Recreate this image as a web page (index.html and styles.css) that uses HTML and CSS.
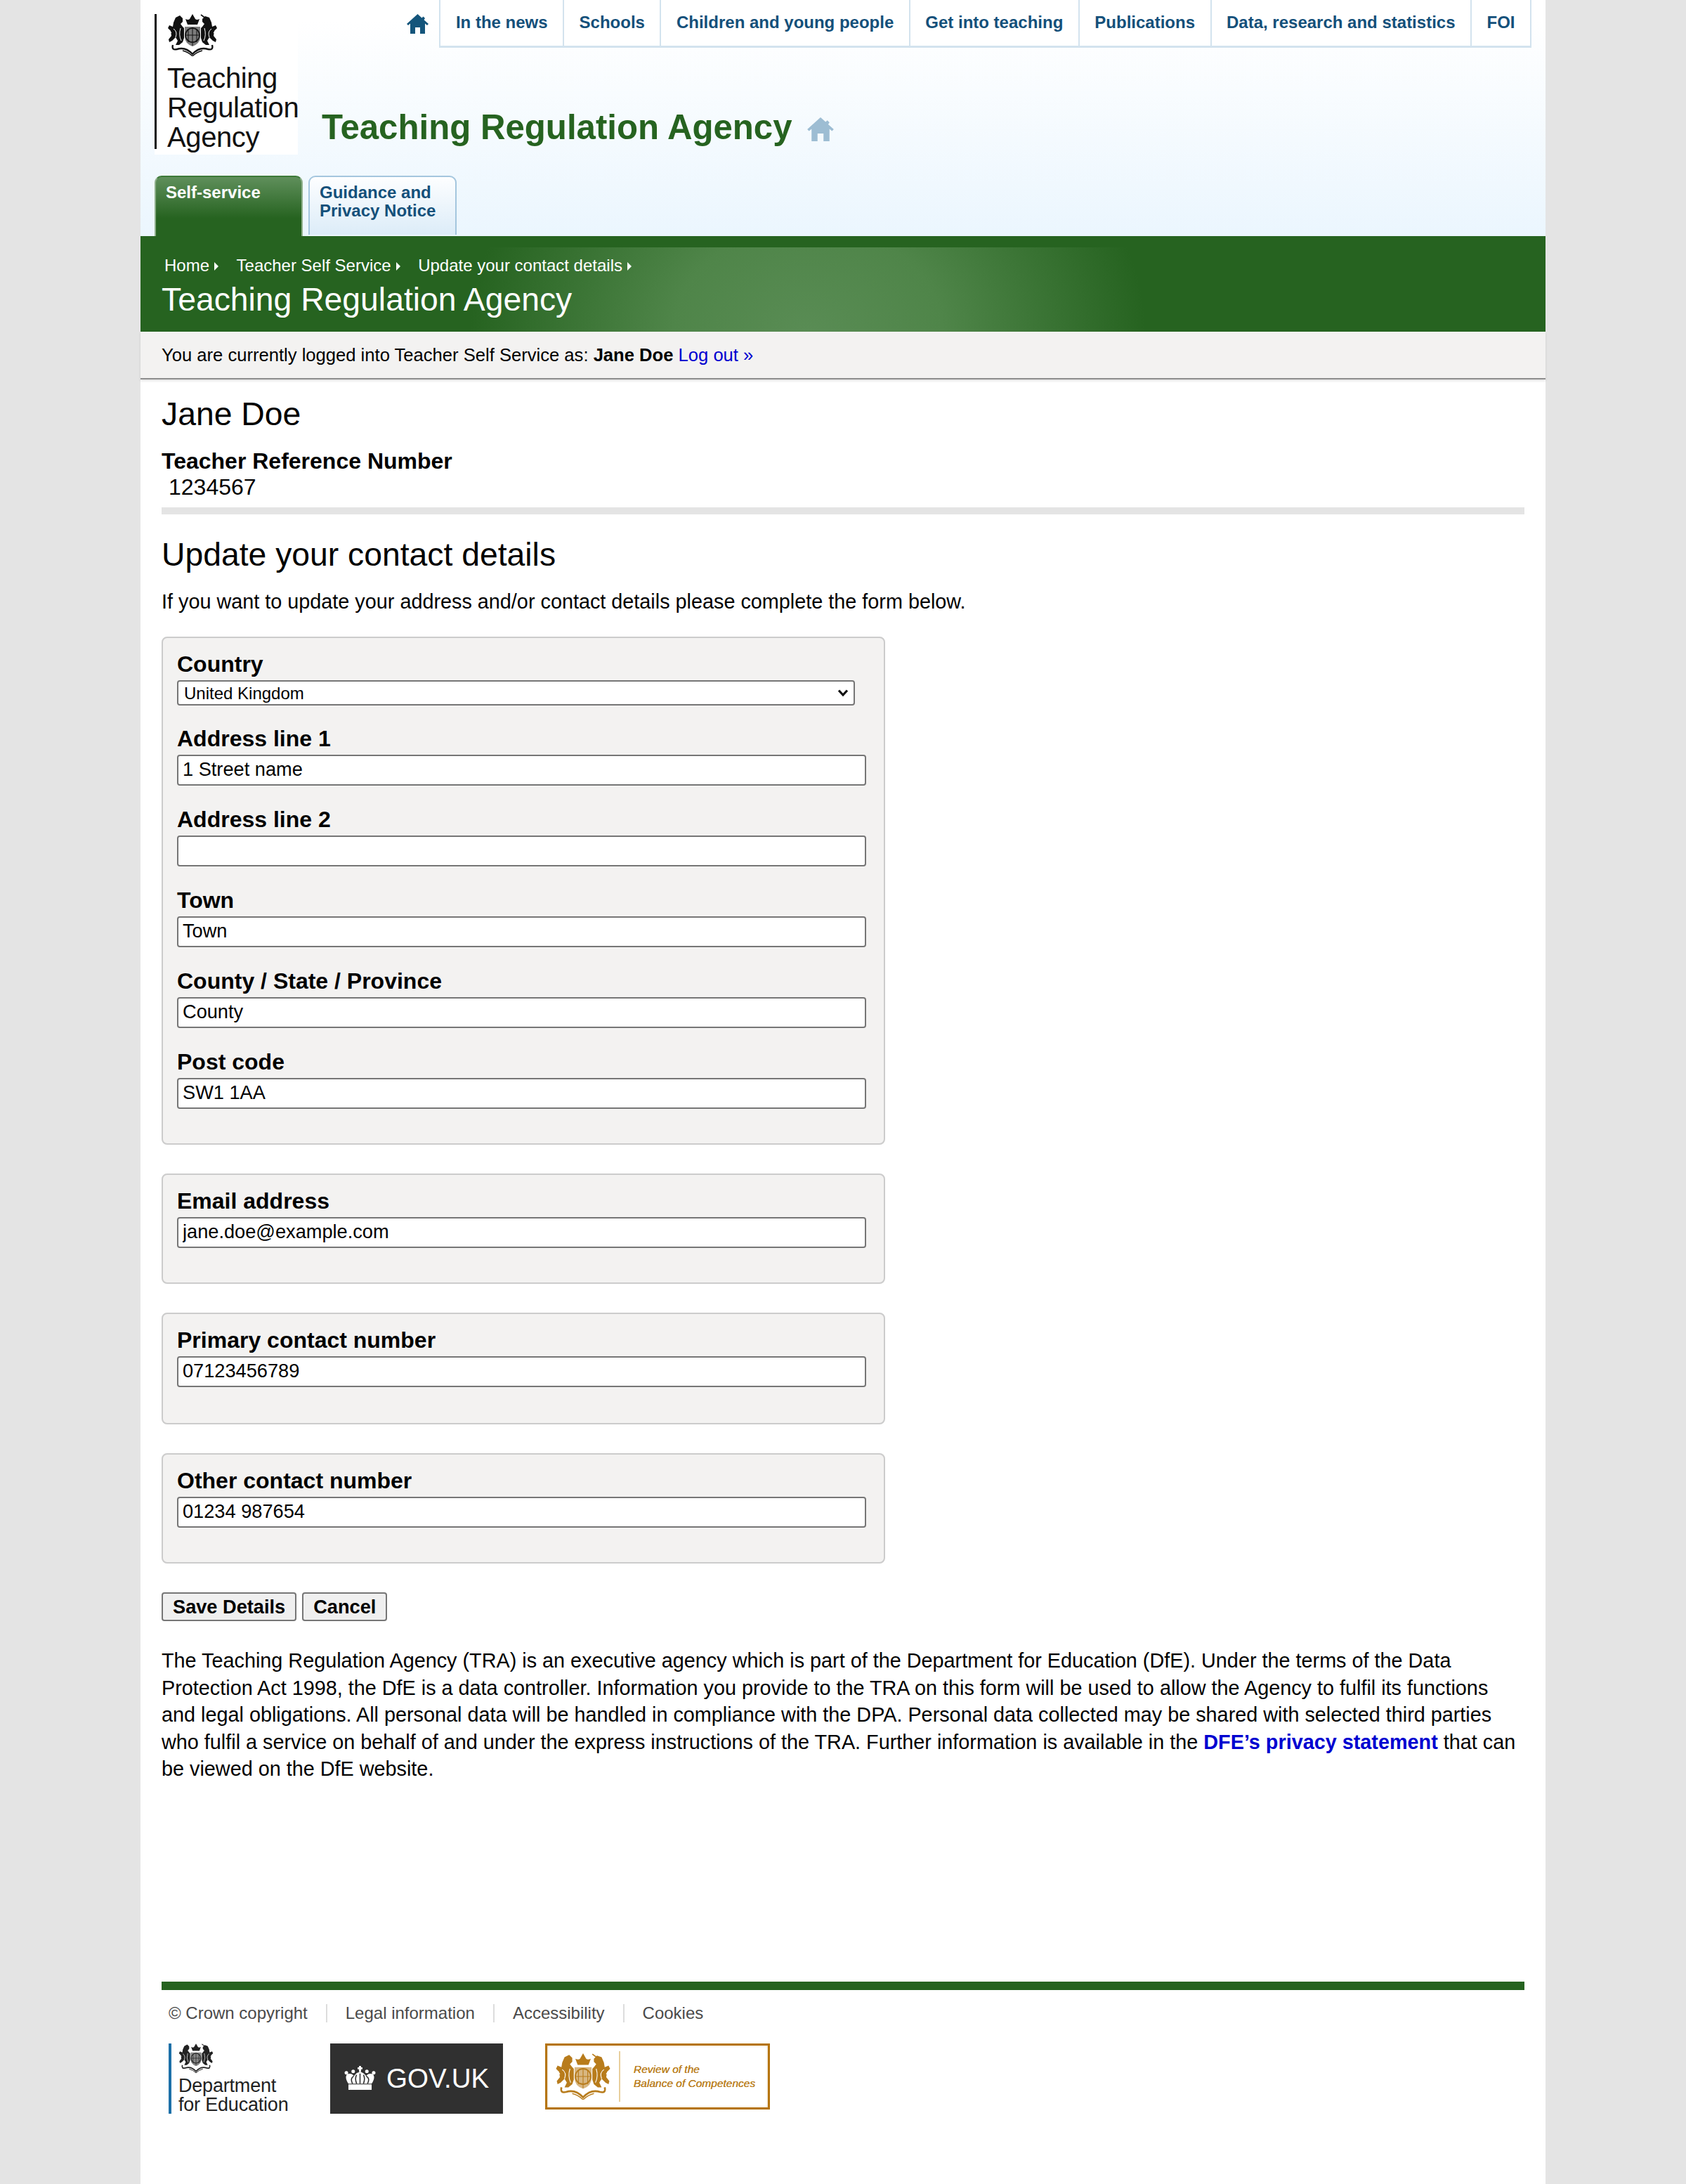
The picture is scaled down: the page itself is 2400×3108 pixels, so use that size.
FILE: index.html
```html
<!DOCTYPE html>
<html lang="en">
<head>
<meta charset="utf-8">
<title>Update your contact details - Teaching Regulation Agency</title>
<link rel="stylesheet" href="styles.css">
</head>
<body>
<svg class="defs" aria-hidden="true">
  <symbol id="crest" viewBox="0 0 72 60">
    <path fill="currentColor" d="M29 15 L26 7 Q30 9 32 7 L36 0 L40 7 Q42 9 46 7 L43 15Z"/>
    <path fill="currentColor" opacity=".55" d="M25 18 H47 V32 Q47 42 36 46 Q25 42 25 32Z"/>
    <circle cx="36" cy="30" r="10" fill="none" stroke="currentColor" stroke-width="1.6"/>
    <path stroke="currentColor" stroke-width="1" d="M36 19V45M26 30H46M30 22V40M42 22V40"/>
    <path fill="currentColor" d="M12 5 L18 2 L22 6 L22 11 L19 14 L22 18 L24 20 V34 L22 40 L17 44 L12 44 L15 38 L12 33 L7 38 L3 40 L2 36 L6 31 L5 24 L1 20 L3 16 L8 18 L9 12 Z"/>
    <path fill="currentColor" d="M60 5 L54 3 L50 7 L50 11 L53 14 L50 18 L48 20 V34 L50 40 L55 44 L60 44 L57 38 L60 33 L65 38 L69 40 L70 36 L66 31 L67 24 L71 20 L69 16 L64 18 L63 12 Z"/>
    <path fill="none" stroke="#fff" stroke-width="1" d="M9 21 Q15 25 12 33 M19 20 Q16 30 20 38 M6 27 L3 23 M63 21 Q57 25 60 33 M53 20 Q56 30 52 38 M66 27 L69 23"/>
    <path stroke="currentColor" stroke-width="1.6" d="M48 1 L56 7"/>
    <path fill="none" stroke="currentColor" stroke-width="2.4" d="M8 44 Q6 52 14 50 Q26 46 36 57 Q46 46 58 50 Q66 52 64 44"/>
    <path fill="none" stroke="currentColor" stroke-width="1.4" d="M22 52 Q30 54 36 60 Q42 54 50 52"/>
  </symbol>
</svg>

<div class="page">
  <header class="header">
    <div class="header-top">
      <a class="logo" href="#">
        <svg class="logo-crest crest"><use href="#crest"/></svg>
        <span class="logo-text">Teaching<br>Regulation<br>Agency</span>
      </a>
      <div class="header-main">
        <nav class="nav">
          <a class="nav-home" href="#" aria-label="Home">
            <svg class="home-icon" viewBox="0 0 31 28"><path d="M15.5 0 L21.5 5.4 L23.5 3.5 L26 6 L24.5 8.2 L31 14 L29 16 L26 13.5 V28 H19 V19 H12 V28 H5 V13.5 L2 16 L0 14 Z"/></svg>
          </a>
          <ul class="nav-list">
            <li class="nav-item"><a href="#">In the news</a></li>
            <li class="nav-item"><a href="#">Schools</a></li>
            <li class="nav-item"><a href="#">Children and young people</a></li>
            <li class="nav-item"><a href="#">Get into teaching</a></li>
            <li class="nav-item"><a href="#">Publications</a></li>
            <li class="nav-item"><a href="#">Data, research and statistics</a></li>
            <li class="nav-item"><a href="#">FOI</a></li>
          </ul>
        </nav>
        <div class="site-title">
          <span>Teaching Regulation Agency</span>
          <svg class="home-icon home-icon-light" viewBox="0 0 31 28"><path d="M15.5 0 L21.5 5.4 L23.5 3.5 L26 6 L24.5 8.2 L31 14 L29 16 L26 13.5 V28 H19 V19 H12 V28 H5 V13.5 L2 16 L0 14 Z"/></svg>
        </div>
      </div>
    </div>
    <div class="tabs">
      <a class="tab tab-active" href="#">Self-service</a>
      <a class="tab tab-idle" href="#">Guidance and<br>Privacy Notice</a>
    </div>
  </header>

  <div class="band">
    <div class="band-inner">
      <ol class="crumbs">
        <li class="crumb"><a href="#">Home</a></li>
        <li class="crumb"><a href="#">Teacher Self Service</a></li>
        <li class="crumb"><a href="#">Update your contact details</a></li>
      </ol>
      <div class="band-title">Teaching Regulation Agency</div>
    </div>
  </div>

  <div class="logged">You are currently logged into Teacher Self Service as: <strong>Jane Doe</strong> <a href="#">Log out »</a></div>

  <main class="main">
    <h1 class="person">Jane Doe</h1>
    <div class="trn-label">Teacher Reference Number</div>
    <div class="trn-value">1234567</div>
    <div class="rule"></div>
    <h2 class="heading">Update your contact details</h2>
    <p class="intro">If you want to update your address and/or contact details please complete the form below.</p>

    <form class="form">
      <fieldset class="box">
        <label class="label label-select">Country</label>
        <select class="select"><option>United Kingdom</option></select>
        <div class="field field-first"><label class="label">Address line 1</label><input class="input" type="text" value="1 Street name"></div>
        <div class="field"><label class="label">Address line 2</label><input class="input" type="text" value=""></div>
        <div class="field"><label class="label">Town</label><input class="input" type="text" value="Town"></div>
        <div class="field"><label class="label">County / State / Province</label><input class="input" type="text" value="County"></div>
        <div class="field"><label class="label">Post code</label><input class="input" type="text" value="SW1 1AA"></div>
      </fieldset>
      <fieldset class="box">
        <div class="field"><label class="label">Email address</label><input class="input" type="text" value="jane.doe@example.com"></div>
      </fieldset>
      <fieldset class="box box-tall">
        <div class="field"><label class="label">Primary contact number</label><input class="input" type="text" value="07123456789"></div>
      </fieldset>
      <fieldset class="box">
        <div class="field"><label class="label">Other contact number</label><input class="input" type="text" value="01234 987654"></div>
      </fieldset>
      <div class="actions">
        <button class="btn" type="button">Save Details</button>
        <button class="btn" type="button">Cancel</button>
      </div>
    </form>

    <p class="notice">The Teaching Regulation Agency (TRA) is an executive agency which is part of the Department for Education (DfE). Under the terms of the Data Protection Act 1998, the DfE is a data controller. Information you provide to the TRA on this form will be used to allow the Agency to fulfil its functions and legal obligations. All personal data will be handled in compliance with the DPA. Personal data collected may be shared with selected third parties who fulfil a service on behalf of and under the express instructions of the TRA. Further information is available in the <a class="notice-link" href="#">DFE’s privacy statement</a> that can be viewed on the DfE website.</p>
  </main>

  <footer class="footer">
    <ul class="foot-links">
      <li class="foot-item">© Crown copyright</li>
      <li class="foot-item">Legal information</li>
      <li class="foot-item">Accessibility</li>
      <li class="foot-item">Cookies</li>
    </ul>
    <div class="foot-logos">
      <div class="dfe">
        <svg class="dfe-crest crest"><use href="#crest"/></svg>
        <span class="dfe-text">Department<br>for Education</span>
      </div>
      <div class="gov">
        <svg class="gov-crown" viewBox="0 0 48 36">
          <path fill="#fff" d="M7 27 H41 V35 H7Z"/>
          <path fill="#fff" d="M7 26 Q1 17 5 12 Q12 10 15 15 Q19 9 24 9 Q29 9 33 15 Q36 10 43 12 Q47 17 41 26Z"/>
          <path fill="none" stroke="#303030" stroke-width="1.6" d="M13 26 Q9 18 15 15 M35 26 Q39 18 33 15 M24 26 V11 M19 26 Q16 18 19 13 M29 26 Q32 18 29 13"/>
          <path fill="#fff" d="M22.5 0 H25.5 V2 H27.5 V5 H25.5 V9 H22.5 V5 H20.5 V2 H22.5Z"/>
          <circle fill="#fff" cx="14" cy="8" r="2.6"/><circle fill="#fff" cx="34" cy="8" r="2.6"/><circle fill="#fff" cx="4" cy="10" r="2.6"/><circle fill="#fff" cx="44" cy="10" r="2.6"/>
        </svg>
        <span class="gov-text">GOV.UK</span>
      </div>
      <div class="review">
        <svg class="review-crest crest"><use href="#crest"/></svg>
        <span class="review-div"></span>
        <span class="review-text">Review of the<br>Balance of Competences</span>
      </div>
    </div>
  </footer>
</div>
</body>
</html>
```
FILE: styles.css
```css
* { box-sizing: border-box; }
html, body { margin: 0; padding: 0; }
body {
  background: #e4e4e4;
  font-family: "Liberation Sans", Arial, sans-serif;
  color: #000;
}
a { text-decoration: none; }
ul, ol { list-style: none; margin: 0; padding: 0; }
.defs { display: none; }
.crest { filter: blur(0.5px); }

.page {
  width: 2000px;
  min-height: 3108px;
  margin: 0 auto;
  background: #fff;
}

/* Header */
.header {
  height: 336px;
  padding: 0 20px;
  background: linear-gradient(#fff 0, #fff 30px, #ebf6fe 100%);
}
.header-top { display: flex; height: 250px; }
.logo {
  display: block;
  width: 204px;
  height: 200px;
  margin-top: 20px;
  padding-left: 15px;
  background: #fff;
  border-left: 3px solid transparent;
  background-image: linear-gradient(#111, #111);
  background-repeat: no-repeat;
  background-size: 3px 192px;
  background-position: -3px 0;
  color: #111;
  overflow: hidden;
}
.logo-crest { display: block; width: 72px; height: 60px; color: #111; }
.logo-text {
  display: block;
  margin-top: 10px;
  font-size: 40px;
  line-height: 42px;
  letter-spacing: -0.4px;
  white-space: nowrap;
}
.header-main { flex: 1; display: flex; flex-direction: column; }
.nav { display: flex; justify-content: flex-end; align-items: flex-start; height: 68px; }
.nav-home { display: block; margin: 20px 15px 0 0; line-height: 0; }
.home-icon { width: 31px; height: 28px; fill: #14557b; }
.nav-list {
  display: flex;
  height: 68px;
  border-bottom: 3px solid #d3e3ee;
  border-left: 2px solid #d3e3ee;
  background: #fff;
}
.nav-item {
  border-right: 2px solid #d3e3ee;
  padding: 0 21.5px;
  font-size: 24px;
  font-weight: bold;
  line-height: 64px;
  white-space: nowrap;
}
.nav-item a { color: #14507a; }
.site-title {
  display: flex;
  align-items: flex-end;
  margin: 85px 0 0 34px;
  color: #266320;
  font-size: 49.2px;
  font-weight: bold;
  line-height: 56px;
}
.home-icon-light { width: 38px; height: 34px; margin: 0 0 8px 21px; fill: #9dbdd3; }

.tabs { display: flex; align-items: flex-start; gap: 8px; height: 86px; }
.tab {
  display: block;
  width: 211px;
  padding: 9px 14px 0;
  border-radius: 10px 10px 0 0;
  font-size: 24px;
  font-weight: bold;
  line-height: 26px;
}
.tab-active {
  height: 86px;
  color: #fff;
  background: linear-gradient(#5f8f5b 0, #266320 70%);
  border: 2px solid #8fb08b;
  border-top-color: #3d7a38;
  border-bottom: 0;
}
.tab-idle {
  height: 84px;
  color: #14507a;
  background: linear-gradient(#fdfeff 0, #dcecf8 100%);
  border: 2px solid #a4c6de;
  border-bottom: 0;
}

/* Green band */
.band { background: #266320; padding-top: 16px; height: 136px; }
.band-inner {
  height: 120px;
  padding: 12px 0 0 30px;
  background: radial-gradient(ellipse 480px 380px at 950px 120px, #598c54 0, #4f8549 40%, #266320 100%);
  color: #fff;
}
.crumbs { display: flex; padding-left: 4px; font-size: 24px; line-height: 28px; height: 28px; }
.crumb { display: flex; align-items: center; margin-right: 25.5px; }
.crumb a { color: #fff; }
.crumb::after {
  content: "";
  margin: 2px 0 0 7px;
  border-left: 6px solid #fff;
  border-top: 6px solid transparent;
  border-bottom: 6px solid transparent;
}
.band-title { margin-top: 8px; font-size: 46.3px; line-height: 52px; }

/* Logged-in strip */
.logged {
  height: 68px;
  padding-left: 30px;
  background: #f3f2f1;
  border-bottom: 2px solid #8e8e8e;
  box-shadow: 0 2px 3px rgba(0, 0, 0, 0.12);
  font-size: 25.6px;
  line-height: 66px;
}
.logged a { color: #0000d0; }

/* Main */
.main { padding: 21px 30px 0; }
.person { margin: 0; font-size: 46.3px; font-weight: normal; line-height: 56px; }
.trn-label { margin-top: 20px; font-size: 32px; font-weight: bold; line-height: 38px; }
.trn-value { padding: 1px 0 0 10px; font-size: 32px; line-height: 34px; }
.rule { height: 10px; margin-top: 12px; background: #e4e4e4; }
.heading { margin: 29px 0 0; font-size: 46.3px; font-weight: normal; line-height: 56px; }
.intro { margin: 20px 0 31px; font-size: 28.8px; line-height: 38px; }

.box {
  width: 1030px;
  margin: 0 0 41px;
  padding: 18px 20px 20px;
  background: #f3f2f1;
  border: 2px solid #ccc;
  border-radius: 8px;
  min-width: 0;
}
.box-tall { padding-bottom: 22px; }
.label { display: block; font-size: 32px; font-weight: bold; line-height: 38px; }
.label-select { margin-bottom: 4px; }
.select {
  display: block;
  width: 965px;
  height: 36px;
  padding: 0 8px;
  font: 24px "Liberation Sans", Arial, sans-serif;
  color: #000;
  background: #fff url("data:image/svg+xml,%3Csvg xmlns='http://www.w3.org/2000/svg' width='16' height='12'%3E%3Cpath d='M2 2.5 L8 9 L14 2.5' fill='none' stroke='%23111' stroke-width='3.2'/%3E%3C/svg%3E") no-repeat right 7px center;
  border: 2px solid #767676;
  border-radius: 4px;
  appearance: none;
  -webkit-appearance: none;
}
.field { margin-bottom: 29px; }
.field-first { margin-top: 28px; }
.field .label { margin-bottom: 4px; }
.input {
  display: block;
  width: 981px;
  height: 44px;
  padding: 0 6px 2px;
  font: 27.2px "Liberation Sans", Arial, sans-serif;
  color: #000;
  background: #fff;
  border: 2px solid #767676;
  border-radius: 4px;
}
.actions { display: flex; gap: 8px; }
.btn {
  height: 41px;
  padding: 0 14px;
  font: bold 27.2px "Liberation Sans", Arial, sans-serif;
  color: #000;
  background: #efefef;
  border: 2px solid #767676;
  border-radius: 4px;
}
.notice { margin: 37px 0 0; font-size: 28.8px; line-height: 38.6px; }
.notice-link { color: #0000d0; font-weight: bold; }

/* Footer */
.footer { margin: 283px 30px 0; border-top: 12px solid #266320; padding-top: 20px; }
.foot-links { display: flex; font-size: 24px; line-height: 26px; color: #4a4a4a; }
.foot-item { padding: 0 26px; border-right: 2px solid #ddd; }
.foot-item:first-child { padding-left: 10px; }
.foot-item:last-child { border-right: 0; }
.foot-logos { display: flex; align-items: flex-start; margin: 30px 0 0 10px; gap: 60px; }

.dfe {
  width: 170px;
  height: 100px;
  padding-left: 10px;
  border-left: 4px solid #1d70a8;
  color: #222;
}
.dfe-crest { display: block; width: 50px; height: 42px; }
.dfe-text { display: block; margin-top: 5px; font-size: 27px; line-height: 27px; letter-spacing: -0.2px; white-space: nowrap; }

.gov {
  display: flex;
  align-items: center;
  width: 246px;
  height: 100px;
  padding-left: 19px;
  background: #303030;
  color: #fff;
}
.gov-crown { width: 47px; height: 35px; filter: blur(0.4px); }
.gov-text { margin-left: 14px; font-size: 38.5px; }

.review {
  display: flex;
  align-items: center;
  width: 320px;
  height: 94px;
  padding-left: 11px;
  border: 3px solid #b5740f;
  box-shadow: inset 0 0 3px rgba(181, 116, 15, 0.5);
  color: #b87c1c;
}
.review-crest { width: 80px; height: 66px; }
.review-div { width: 2px; height: 72px; margin: 0 19px 0 11px; background: #e8cf9d; }
.review-text { font-size: 15.5px; font-style: italic; line-height: 20px; color: #b87c1c; text-shadow: 0 0 0.6px #b87c1c; white-space: nowrap; }
```
